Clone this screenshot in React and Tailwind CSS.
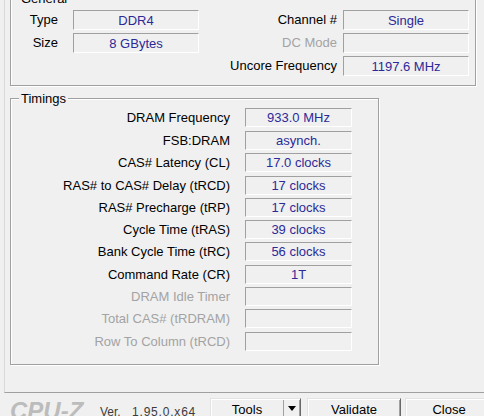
import React from 'react';

const etched = 'border border-[#a0a0a0] shadow-[inset_1px_1px_0_#ffffff,1px_1px_0_#ffffff]';
const sunken = 'border border-t-[#a0a0a0] border-l-[#a0a0a0] border-r-white border-b-white';
const raised =
  'border border-t-[#e3e3e3] border-l-[#e3e3e3] border-r-[#696969] border-b-[#696969] shadow-[inset_1px_1px_0_#ffffff,inset_-1px_-1px_0_#a0a0a0] bg-[#f0f0f0]';

const timings = [
  { label: 'DRAM Frequency', value: '933.0 MHz', gap: 'mt-0' },
  { label: 'FSB:DRAM', value: 'asynch.', gap: 'mt-[4px]' },
  { label: 'CAS# Latency (CL)', value: '17.0 clocks', gap: 'mt-[3px]' },
  { label: 'RAS# to CAS# Delay (tRCD)', value: '17 clocks', gap: 'mt-[4px]' },
  { label: 'RAS# Precharge (tRP)', value: '17 clocks', gap: 'mt-[3px]' },
  { label: 'Cycle Time (tRAS)', value: '39 clocks', gap: 'mt-[3px]' },
  { label: 'Bank Cycle Time (tRC)', value: '56 clocks', gap: 'mt-[3px]' },
  { label: 'Command Rate (CR)', value: '1T', gap: 'mt-[4px]' },
  { label: 'DRAM Idle Timer', value: '', gap: 'mt-[3px]', off: true },
  { label: 'Total CAS# (tRDRAM)', value: '', gap: 'mt-[3px]', off: true },
  { label: 'Row To Column (tRCD)', value: '', gap: 'mt-[4px]', off: true },
];

const Field = ({ value, className = 'h-[20px]' }) => (
  <div className={`${className} ${sunken} flex items-center justify-center text-[#2c2a98]`}>{value}</div>
);

const GroupBox = ({ title, className, children }) => (
  <div className={`relative flex-none ${etched} ${className}`}>
    <span className="absolute left-[8px] -top-[8px] px-[2px] bg-[#f0f0f0] text-black">{title}</span>
    {children}
  </div>
);

const App = () => {
  return (
    <div className="w-[484px] h-[416px] overflow-hidden bg-[#f0f0f0] flex flex-col font-['Liberation_Sans',Arial,sans-serif] text-[13px] leading-[15px] text-black">
      {/* tab page */}
      <div className="ml-[4px] h-[393px] flex-none flex flex-col border-l border-b border-l-[#d9d9d9] border-b-[#a0a0a0]">
        <GroupBox title="General" className="ml-[5px] -mt-[2px] w-[466px] h-[88px]">
          <div className="flex pt-[11px]">
            <div className="grid grid-cols-[47px_126px] gap-x-[15px] gap-y-[3px] auto-rows-[20px]">
              <div className="text-right leading-[20px]">Type</div>
              <Field value="DDR4" />
              <div className="text-right leading-[20px]">Size</div>
              <Field value="8 GBytes" />
            </div>
            <div className="ml-auto mr-[6px] grid grid-cols-[auto_126px] gap-x-[6px] gap-y-[3px] auto-rows-[20px]">
              <div className="text-right leading-[20px]">Channel #</div>
              <Field value="Single" />
              <div className="text-right leading-[20px] text-[#a3a3a3]">DC Mode</div>
              <Field value="" />
              <div className="text-right leading-[20px]">Uncore Frequency</div>
              <Field value="1197.6 MHz" />
            </div>
          </div>
        </GroupBox>

        <GroupBox title="Timings" className="ml-[5px] mt-[12px] w-[369px] h-[267px]">
          <div className="flex flex-col pt-[9px]">
            {timings.map((t) => (
              <div key={t.label} className={`flex h-[19px] ${t.gap}`}>
                <div className={`w-[219px] text-right leading-[19px] ${t.off ? 'text-[#a3a3a3]' : 'text-black'}`}>
                  {t.label}
                </div>
                <Field value={t.value} className="ml-[15px] w-[107px] h-[19px]" />
              </div>
            ))}
          </div>
        </GroupBox>
      </div>

      {/* bottom bar */}
      <div className="flex items-start">
        <div className="flex-none ml-[10px] w-[90px] mt-[6px] text-[24px] leading-[24px] font-bold italic text-[#bcbcbc]">CPU-Z</div>
        <div className="flex-none w-[110px] mt-[12px] text-[12px] leading-[14px] text-[#3c3c3c]">
          Ver. <span className="ml-[8px] tracking-[0.8px]">1.95.0.x64</span>
        </div>
        <div className={`flex-none mt-[5px] w-[91px] h-[24px] flex ${raised}`}>
          <div className="w-[72px] pt-[3px] text-center">Tools</div>
          <div className="w-px h-[20px] mt-[1px] bg-[#a0a0a0]" />
          <div className="flex-1 flex justify-center pt-[7px]">
            <svg width="8" height="5" viewBox="0 0 8 5">
              <path d="M0 0h8L4 5z" fill="#000" />
            </svg>
          </div>
        </div>
        <div className={`flex-none mt-[5px] ml-[6px] w-[94px] h-[24px] pt-[3px] text-center ${raised}`}>Validate</div>
        <div className={`flex-none mt-[5px] ml-[4px] w-[88px] h-[24px] pt-[3px] text-center ${raised}`}>Close</div>
      </div>
    </div>
  );
};

export default App;
